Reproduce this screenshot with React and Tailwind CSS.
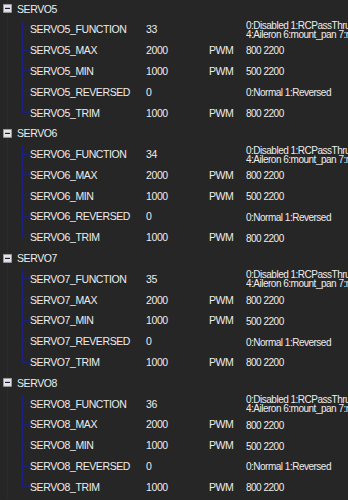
import React from 'react';

const LINE = '#1d2185';

const groups = [
  { n: 5, fn: '33' },
  { n: 6, fn: '34' },
  { n: 7, fn: '35' },
  { n: 8, fn: '36' },
];

function rowsFor(g) {
  return [
    { name: `SERVO${g.n}_FUNCTION`, value: g.fn, units: '', opts: ['0:Disabled 1:RCPassThru 2:Flap 3:Flap_auto', '4:Aileron 6:mount_pan 7:mount_tilt 8:mount_roll'] },
    { name: `SERVO${g.n}_MAX`, value: '2000', units: 'PWM', opts: ['800 2200'] },
    { name: `SERVO${g.n}_MIN`, value: '1000', units: 'PWM', opts: ['500 2200'] },
    { name: `SERVO${g.n}_REVERSED`, value: '0', units: '', opts: ['0:Normal 1:Reversed'] },
    { name: `SERVO${g.n}_TRIM`, value: '1000', units: 'PWM', opts: ['800 2200'] },
  ];
}

// gutter with the root level vertical line, optional collapse box
function RootGutter({ box }) {
  return (
    <svg className="w-[15px] h-full shrink-0" viewBox="0 0 15 21" preserveAspectRatio="none">
      <line x1="7.5" y1="0" x2="7.5" y2="21" stroke={LINE} strokeWidth="1" vectorEffect="non-scaling-stroke" />
      {box && (
        <g>
          <rect x="3.5" y="4.5" width="8" height="8" fill="#e4e4e4" stroke="#9a9a9a" vectorEffect="non-scaling-stroke" />
          <line x1="5" y1="8.5" x2="10" y2="8.5" stroke="#1a1a4a" strokeWidth="1.2" vectorEffect="non-scaling-stroke" />
        </g>
      )}
    </svg>
  );
}

function ChildGutter({ last }) {
  return (
    <svg className="w-[15px] h-full shrink-0" viewBox="0 0 15 21" preserveAspectRatio="none">
      <line x1="7.5" y1="0" x2="7.5" y2={last ? 8.5 : 21} stroke={LINE} vectorEffect="non-scaling-stroke" />
      <line x1="7.5" y1="8.5" x2="15" y2="8.5" stroke={LINE} vectorEffect="non-scaling-stroke" />
    </svg>
  );
}

export default function App() {
  return (
    <div
      className="w-[348px] h-[500px] overflow-hidden bg-[#262626] text-[#ededed] text-[10.5px] tracking-[-0.4px]"
      style={{ fontFamily: '"Liberation Sans", Arial, sans-serif' }}
    >
      {groups.map((g) => (
        <div key={g.n}>
          {/* header */}
          <div className="flex h-[20.8px] items-stretch">
            <RootGutter box />
            <div className="flex items-center pl-[2px] pb-[2px]">SERVO{g.n}</div>
          </div>
          {rowsFor(g).map((r, i, arr) => (
            <div key={r.name} className="flex h-[20.8px] items-stretch">
              <RootGutter />
              <ChildGutter last={i === arr.length - 1} />
              <div className="flex items-center w-[116px] shrink-0 pb-[2px] whitespace-nowrap">{r.name}</div>
              <div className="flex items-center w-[63px] shrink-0 pb-[2px]">{r.value}</div>
              <div className="flex items-center w-[37px] shrink-0 pb-[2px]">{r.units}</div>
              <div className={`flex flex-col min-w-0 flex-1 overflow-hidden whitespace-nowrap text-[10px] tracking-[-0.5px] ${r.opts.length > 1 ? 'justify-start leading-[9px]' : 'justify-center pb-[2px] leading-[11px]'}`}>
                {r.opts.map((o) => (
                  <span key={o}>{o}</span>
                ))}
              </div>
            </div>
          ))}
        </div>
      ))}
    </div>
  );
}
